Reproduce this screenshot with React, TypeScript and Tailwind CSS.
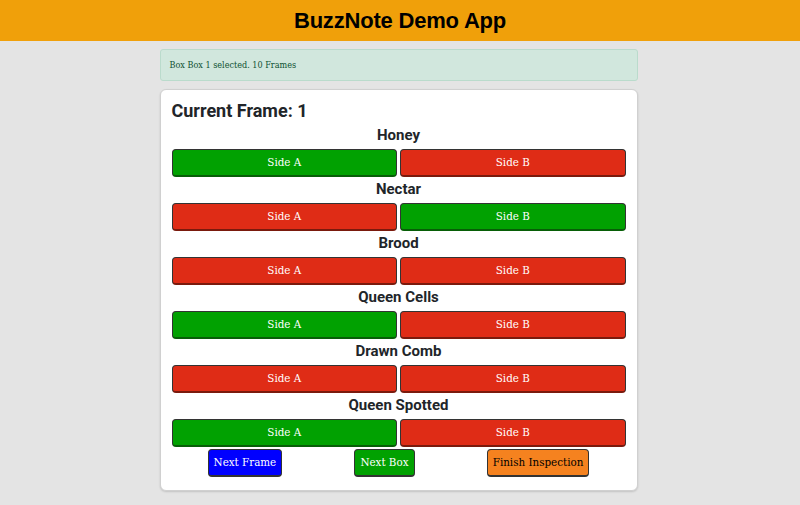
const sections = [
  { name: "Honey", a: true, b: false },
  { name: "Nectar", a: false, b: true },
  { name: "Brood", a: false, b: false },
  { name: "Queen Cells", a: true, b: false },
  { name: "Drawn Comb", a: false, b: false },
  { name: "Queen Spotted", a: true, b: false },
];

const slab = "font-['DejaVu_Serif_Condensed','DejaVu_Serif',serif]";

const SideButton = ({ label, on }: { label: string; on: boolean }) => (
  <button
    type="button"
    className={`flex-1 h-[28px] rounded-[4px] border border-[#333] border-b-2 text-white text-[11.5px] ${slab} ${
      on ? "bg-[#01a101] border-b-[#075e07]" : "bg-[#df2c16] border-b-[#7a1a0d]"
    }`}
  >
    {label}
  </button>
);

export default function App() {
  return (
    <div className="min-h-[505px] bg-[#e4e4e4] font-['Roboto',sans-serif]">
      <header className="h-[41px] bg-[#f0a00a] flex items-center justify-center">
        <h1 className="text-[22px] font-bold text-black font-['Liberation_Sans',Arial,sans-serif] tracking-[-0.2px]">
          BuzzNote Demo App
        </h1>
      </header>

      <div className="pr-[3px]">
        <div className="w-[478px] mx-auto pt-2 flex flex-col gap-2">
          <div
            className={`h-[32px] rounded-[3px] border border-[#badbcc] bg-[#d1e7dd] px-[9px] pt-[2px] flex items-center text-[9px] text-[#0f5132] ${slab}`}
          >
            Box Box 1 selected. 10 Frames
          </div>

          <div className="bg-white rounded-[6px] border border-[#d0d0d0] shadow-[0_1px_2px_rgba(0,0,0,0.15)] px-[11px] pt-[10px] pb-[13px]">
            <h2 className="text-[18px] leading-[22px] font-bold text-[#212529] mb-[3px]">
              Current Frame: 1
            </h2>

            {sections.map((s) => (
              <div key={s.name} className="mb-[2px]">
                <h3 className="text-[15px] leading-[20px] font-bold text-[#212529] text-center mb-[4px]">
                  {s.name}
                </h3>
                <div className="flex gap-[3px]">
                  <SideButton label="Side A" on={s.a} />
                  <SideButton label="Side B" on={s.b} />
                </div>
              </div>
            ))}

            <div className={`flex justify-around mt-[1px] text-[11.5px] ${slab}`}>
              <button
                type="button"
                className="h-[28px] px-[5px] rounded-[4px] border border-[#333] border-b-2 bg-[#0000ff] text-white"
              >
                Next Frame
              </button>
              <button
                type="button"
                className="h-[28px] px-[5px] rounded-[4px] border border-[#333] border-b-2 bg-[#01a101] text-white"
              >
                Next Box
              </button>
              <button
                type="button"
                className="h-[28px] px-[5px] rounded-[4px] border border-[#333] border-b-2 bg-[#f5821f] text-black"
              >
                Finish Inspection
              </button>
            </div>
          </div>
        </div>
      </div>
    </div>
  );
}
